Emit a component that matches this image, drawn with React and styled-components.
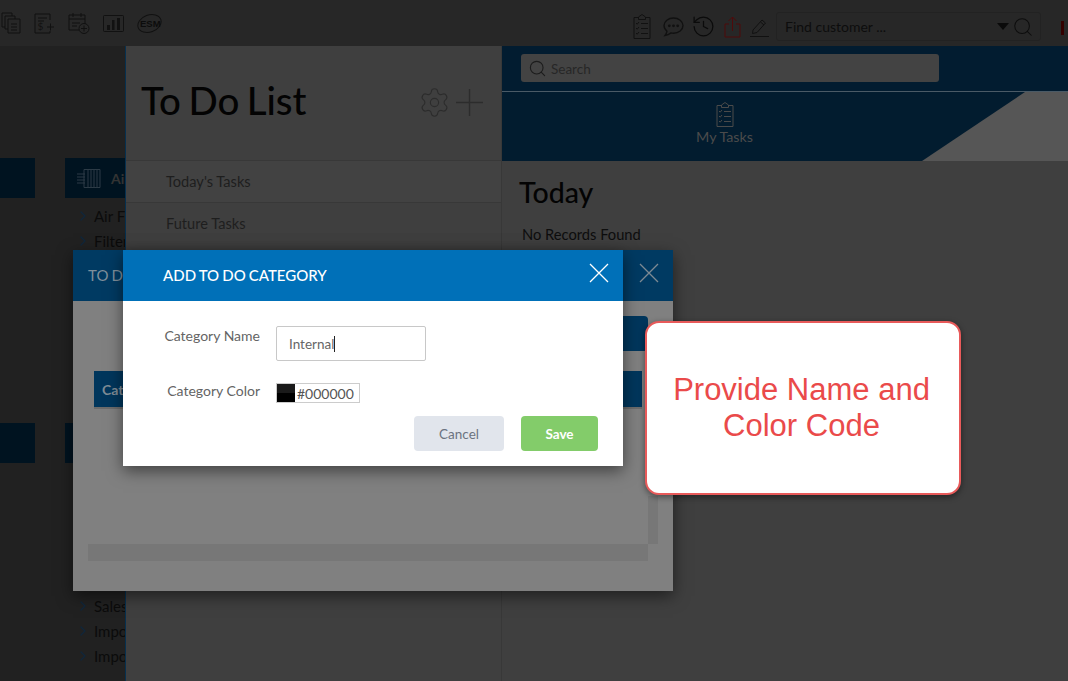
import React from "react";
import styled, { createGlobalStyle } from "styled-components";
import { Settings, Search, ChevronRight, History } from "lucide-react";

const Global = createGlobalStyle`
  html, body { margin: 0; padding: 0; background: #212121; }
  * { box-sizing: border-box; }
  body { font-family: Lato, "Noto Sans", sans-serif; }
`;

const Page = styled.div`
  position: relative;
  width: 1068px;
  height: 681px;
  overflow: hidden;
  display: flex;
  flex-direction: column;
  background: #212121;
`;

const TopBar = styled.header`
  height: 46px;
  flex: none;
  background: #272727;
  display: flex;
  align-items: center;
  padding: 0 0 0 1px;
`;

const LeftTools = styled.div`
  display: flex;
  align-items: center;
  gap: 13px;
`;

const RightTools = styled.div`
  display: flex;
  align-items: center;
  margin-left: auto;
  margin-top: 7px;
  color: #0b0b0b;
`;

const ToolIcon = styled.svg`
  display: block;
  flex: none;
  fill: none;
  stroke: ${(p) => p.$color || "#111"};
  stroke-width: ${(p) => p.$stroke || 1};
`;

const IconSlot = styled.span`
  display: flex;
  margin-left: ${(p) => p.$gap}px;
  color: #0b0b0b;
`;

const FindBox = styled.div`
  width: 265px;
  height: 29px;
  margin: 0 27px 0 6px;
  border: 1px solid #222;
  border-radius: 3px;
  display: flex;
  align-items: center;
  padding: 0 6px 0 8px;
  color: #0d0d0d;
  font-size: 14px;
  position: relative;
  &::after {
    content: "";
    position: absolute;
    right: -24px;
    top: 8px;
    width: 3px;
    height: 14px;
    background: #300;
  }
`;

const FindText = styled.span`
  flex: 1;
`;

const Caret = styled.span`
  width: 0;
  height: 0;
  border-left: 6px solid transparent;
  border-right: 6px solid transparent;
  border-top: 7px solid #0a0a0a;
  margin-right: 3px;
`;

const Workspace = styled.main`
  flex: 1;
  display: grid;
  grid-template-columns: 35px 300px;
  grid-auto-rows: 265px;
  column-gap: 30px;
  padding-top: 112px;
`;

const CategoryCard = styled.section`
  display: flex;
  flex-direction: column;
`;

const CategoryHead = styled.div`
  height: 40px;
  background: #001320;
  color: #333;
  display: flex;
  align-items: center;
  gap: 10px;
  padding-left: 12px;
  font-size: 14px;
  font-weight: 700;
`;

const CategoryList = styled.ul`
  list-style: none;
  margin: 5px 0 0;
  padding: 0 0 0 10px;
`;

const CategoryItem = styled.li`
  height: 25px;
  display: flex;
  align-items: center;
  gap: 3px;
  color: #0b0b0b;
  font-size: 15px;
  svg { color: #10263a; flex: none; }
`;

const TodoPanel = styled.section`
  position: absolute;
  left: 125px;
  top: 46px;
  right: 0;
  bottom: 0;
  display: flex;
  background: #3f3f3f;
  border-left: 1px solid #06304f;
`;

const TodoSide = styled.aside`
  width: 376px;
  flex: none;
  border-right: 1px solid #383838;
`;

const TodoTitleBar = styled.div`
  height: 114px;
  display: flex;
  align-items: center;
  padding: 0 18px 2px 15px;
  color: #2c2c2c;
  gap: 5px;
`;

const TodoTitle = styled.h1`
  margin: 0 0 5px;
  flex: 1;
  font-size: 38.5px;
  font-weight: 500;
  color: #030303;
  letter-spacing: -0.1px;
  word-spacing: -2px;
`;

const TodoRow = styled.div`
  height: 42px;
  display: flex;
  align-items: center;
  padding: 0 0 1px 40px;
  border-top: 1px solid #383838;
  font-size: 14.6px;
  color: #1e1e1e;
  background: ${(p) => (p.$active ? "#424242" : "transparent")};
`;

const TodoMain = styled.div`
  flex: 1;
  display: flex;
  flex-direction: column;
  min-width: 0;
`;

const SearchStrip = styled.div`
  height: 46px;
  flex: none;
  background: #021c30;
  border-bottom: 1px solid #4a5a66;
  padding: 8px 0 0 19px;
`;

const SearchField = styled.div`
  width: 418px;
  height: 28px;
  background: #434343;
  border-radius: 3px;
  display: flex;
  align-items: center;
  gap: 4px;
  padding: 1px 0 0 7px;
  font-size: 13.5px;
  color: #272727;
  svg { color: #1c1c1c; }
`;

const TabStrip = styled.div`
  height: 69px;
  flex: none;
  background: #565656;
`;

const ActiveTab = styled.div`
  height: 100%;
  width: 100%;
  background: #021c2f;
  clip-path: polygon(0 0, 523px 0, 420px 100%, 0 100%);
  padding: 10px 0 0;
  color: #4b4b4b;
  font-size: 14.3px;
`;

const TabInner = styled.div`
  width: 445px;
  display: flex;
  flex-direction: column;
  align-items: center;
`;

const TabLabel = styled.span`
  margin-top: 1px;
`;

const TodayPane = styled.div`
  flex: 1;
  padding: 13px 17px;
`;

const TodayTitle = styled.h2`
  margin: 0;
  font-size: 28.5px;
  font-weight: 500;
  color: #030303;
  line-height: 36px;
`;

const EmptyNote = styled.p`
  margin: 15px 0 0 3px;
  font-size: 14.7px;
  color: #0e0e0e;
`;

const CategoriesModal = styled.section`
  position: absolute;
  left: 73px;
  top: 250px;
  width: 600px;
  height: 341px;
  background: #808080;
  box-shadow: 0 5px 15px rgba(0, 0, 0, 0.5);
`;

const ModalHead = styled.header`
  height: 51px;
  background: ${(p) => p.$bg};
  color: ${(p) => p.$fg};
  display: flex;
  align-items: center;
  justify-content: space-between;
  padding: 0 ${(p) => p.$right}px 1px ${(p) => p.$left}px;
  font-size: 15px;
  svg { margin-top: -5px; }
`;

const ModalTitle = styled.span`
  font-weight: ${(p) => p.$weight};
  word-spacing: -0.7px;
`;

const AddButton = styled.div`
  position: absolute;
  right: 25px;
  top: 66px;
  width: 60px;
  height: 35px;
  background: #00365c;
  border-radius: 4px;
`;

const TableHead = styled.div`
  position: absolute;
  left: 21px;
  top: 121px;
  width: 548px;
  height: 36px;
  background: #00365c;
  color: #7e8b95;
  font-weight: 700;
  font-size: 14px;
  display: flex;
  align-items: center;
  padding: 0 0 0 8px;
  box-shadow: 0 2px 0 #6c6c6c;
`;

const ScrollH = styled.div`
  position: absolute;
  left: 15px;
  top: 294px;
  width: 560px;
  height: 17px;
  background: #777;
`;

const ScrollV = styled.div`
  position: absolute;
  left: 575px;
  top: 246px;
  width: 10px;
  height: 48px;
  background: #777;
`;

const AddModal = styled.section`
  position: absolute;
  left: 123px;
  top: 250px;
  width: 500px;
  height: 216px;
  background: #fff;
  box-shadow: 0 5px 15px rgba(0, 0, 0, 0.5);
`;

const FormBody = styled.div`
  padding: 25px 25px 0 0;
  display: flex;
  flex-direction: column;
`;

const FieldRow = styled.div`
  display: flex;
  align-items: flex-start;
  height: ${(p) => p.$height}px;
`;

const FieldLabel = styled.label`
  width: 137px;
  margin-top: ${(p) => p.$top}px;
  text-align: right;
  font-size: 14px;
  color: #646464;
  line-height: 20px;
`;

const TextInput = styled.div`
  width: 150px;
  height: 35px;
  margin-left: 16px;
  border: 1px solid #c8c8c8;
  border-radius: 2px;
  padding-left: 12px;
  font-size: 13.5px;
  color: #666;
  display: flex;
  align-items: center;
`;

const Cursor = styled.span`
  width: 1px;
  height: 16px;
  background: #222;
`;

const ColorField = styled.div`
  margin-left: 16px;
  width: 84px;
  height: 20px;
  border: 1px solid #ccc;
  display: flex;
  align-items: center;
  font-size: 14px;
  color: #555;
`;

const Swatch = styled.span`
  width: 18px;
  height: 18px;
  margin-right: 2px;
  background: linear-gradient(#1a1a1a 50%, #000 50%);
`;

const FormActions = styled.div`
  display: flex;
  justify-content: flex-end;
  gap: 17px;
  margin-top: -7px;
`;

const ActionButton = styled.button`
  height: 35px;
  border: 0;
  border-radius: 4px;
  font-family: inherit;
  font-size: 13.5px;
  width: ${(p) => p.$width}px;
  background: ${(p) => p.$bg};
  color: ${(p) => p.$fg};
  font-weight: ${(p) => p.$weight};
`;

const Callout = styled.aside`
  position: absolute;
  left: 645px;
  top: 321px;
  width: 316px;
  height: 174px;
  background: #fff;
  border: 2px solid #e85a5a;
  border-radius: 14px;
  box-shadow: 0 2px 6px rgba(0, 0, 0, 0.45);
  display: flex;
  align-items: center;
  justify-content: center;
  text-align: center;
  font-family: "Liberation Sans", Arial, sans-serif;
  font-size: 31px;
  line-height: 36px;
  color: #ea4a4a;
  padding: 0 3px 1px 0;
`;

const Clipboard = ({ color = "#111" }) => (
  <ToolIcon $color={color} width={18} height={25} viewBox="0 0 18 25">
    <path d="M5.5 3.5H1v21h16v-21h-4.5M5.5 5.5V3l3.5-2.5L12.5 3v2.5z" />
    <path d="M3 9l1.2 1.2L6 8M3 14l1.2 1.2L6 13M3 19l1.2 1.2L6 18M8 9.5h7M8 14.5h7M8 19.5h7" />
  </ToolIcon>
);

const CloseMark = ({ color }) => (
  <ToolIcon $color={color} $stroke={1.3} width={20} height={20} viewBox="0 0 20 20">
    <path d="M1 1l18 18M19 1L1 19" />
  </ToolIcon>
);

const leftIcons = [
  <ToolIcon key="a" width={20} height={22} viewBox="0 0 20 22">
    <path d="M1 1h10v3M1 1v14h3M4 4h10v3M4 4v13h3M7 7h12v14H7zM10 12h6M10 15h6M10 18h6" />
  </ToolIcon>,
  <ToolIcon key="b" width={21} height={21} viewBox="0 0 21 21">
    <path d="M16 7V1H1v19h15v-2M4 5h9M4 8h6" />
    <path d="M13 14h7M16.5 10.5v7" />
    <text x="3.5" y="17" fontSize="10" fontFamily="Lato" fill="#111" stroke="none">$</text>
  </ToolIcon>,
  <ToolIcon key="c" width={22} height={22} viewBox="0 0 22 22">
    <path d="M11 18H1V3h16v9M1 7h16M5 1v4M13 1v4M4 11h8M4 14h5" />
    <circle cx="16" cy="16.5" r="5" />
    <path d="M13 16.5h6M16 13.5v6" />
  </ToolIcon>,
  <ToolIcon key="d" width={21} height={17} viewBox="0 0 21 17">
    <rect x="0.5" y="0.5" width="20" height="16" rx="1" />
    <path d="M4 10h3v5H4zM9 5h2.5v10H9zM14 3h3v12h-3z" fill="#111" stroke="none" />
  </ToolIcon>,
  <ToolIcon key="e" width={25} height={21} viewBox="0 0 25 21">
    <ellipse cx="12.5" cy="10.5" rx="12" ry="8.5" transform="rotate(-20 12.5 10.5)" />
    <text x="3" y="14" fontSize="9.5" fontWeight="700" fontFamily="Liberation Sans" fill="#0c0c0c" stroke="none">ESM</text>
  </ToolIcon>,
];

export default function App() {
  return (
    <Page>
      <Global />
      <TopBar>
        <LeftTools>{leftIcons}</LeftTools>
        <RightTools>
          <IconSlot $gap={0}><Clipboard /></IconSlot>
          <IconSlot $gap={12}>
            <ToolIcon $stroke={1.4} width={21} height={20} viewBox="0 0 21 20">
              <path d="M10.5 1C5.3 1 1 4.4 1 8.6c0 2.2 1.2 4.2 3 5.6-.2 1.6-1 3-2 4.3 2.3-.3 4.4-1.3 6-2.6.8.2 1.6.3 2.5.3 5.2 0 9.5-3.4 9.5-7.6S15.7 1 10.5 1z" />
              <circle cx="6.3" cy="8.8" r="1.4" fill="#111" stroke="none" />
              <circle cx="10.5" cy="8.8" r="1.4" fill="#111" stroke="none" />
              <circle cx="14.7" cy="8.8" r="1.4" fill="#111" stroke="none" />
            </ToolIcon>
          </IconSlot>
          <IconSlot $gap={7}><History size={25} strokeWidth={1.2} /></IconSlot>
          <IconSlot $gap={8}>
            <ToolIcon $color="#4f0a0a" width={17} height={22} viewBox="0 0 17 22">
              <path d="M5 8H1v13h15V8h-4M8.5 15V1M4.5 5l4-4 4 4" />
            </ToolIcon>
          </IconSlot>
          <IconSlot $gap={9}>
            <ToolIcon width={20} height={20} viewBox="0 0 20 20">
              <path d="M3 13l9-10 3.5 3L7 15.5 2.5 16.5zM10.5 5l3.5 3M0 19.5h19" />
            </ToolIcon>
          </IconSlot>
          <FindBox>
            <FindText>Find customer ...</FindText>
            <Caret />
            <Search size={22} strokeWidth={1.1} />
          </FindBox>
        </RightTools>
      </TopBar>

      <Workspace>
        <CategoryCard><CategoryHead /></CategoryCard>
        <CategoryCard>
          <CategoryHead>
            <ToolIcon $color="#2c3b46" width={24} height={19} viewBox="0 0 24 19">
              <path d="M7 .5h16v18H7zM11 .5v18M14 .5v18M17 .5v18M20 .5v18M0 5h8M0 8h8M0 11h8M0 14h8" />
            </ToolIcon>
            Air
          </CategoryHead>
          <CategoryList>
            <CategoryItem><ChevronRight size={16} />Air Filters</CategoryItem>
            <CategoryItem><ChevronRight size={16} />Filters</CategoryItem>
          </CategoryList>
        </CategoryCard>
        <CategoryCard><CategoryHead /></CategoryCard>
        <CategoryCard>
          <CategoryHead />
          <CategoryList>
            {["Items", "Orders", "Stock", "Parts", "Vendors", "Sales", "Import", "Import"].map((t, i) => (
              <CategoryItem key={i}><ChevronRight size={16} />{t}</CategoryItem>
            ))}
          </CategoryList>
        </CategoryCard>
      </Workspace>

      <TodoPanel>
        <TodoSide>
          <TodoTitleBar>
            <TodoTitle>To Do List</TodoTitle>
            <Settings size={33} strokeWidth={0.8} />
            <ToolIcon $color="#2c2c2c" $stroke={1.4} width={27} height={27} viewBox="0 0 27 27">
              <path d="M0 13.5h27M13.5 0v27" />
            </ToolIcon>
          </TodoTitleBar>
          <TodoRow $active>Today's Tasks</TodoRow>
          <TodoRow>Future Tasks</TodoRow>
        </TodoSide>
        <TodoMain>
          <SearchStrip>
            <SearchField><Search size={19} strokeWidth={1.4} />Search</SearchField>
          </SearchStrip>
          <TabStrip>
            <ActiveTab>
              <TabInner>
                <Clipboard color="#4a4a4a" />
                <TabLabel>My Tasks</TabLabel>
              </TabInner>
            </ActiveTab>
          </TabStrip>
          <TodayPane>
            <TodayTitle>Today</TodayTitle>
            <EmptyNote>No Records Found</EmptyNote>
          </TodayPane>
        </TodoMain>
      </TodoPanel>

      <CategoriesModal>
        <ModalHead $bg="#003a62" $fg="#7f8f9b" $left={15} $right={14}>
          <ModalTitle $weight={400}>TO DO CATEGORY</ModalTitle>
          <CloseMark color="#7d8a93" />
        </ModalHead>
        <AddButton />
        <TableHead>Category</TableHead>
        <ScrollV />
        <ScrollH />
      </CategoriesModal>

      <AddModal>
        <ModalHead $bg="#0070b8" $fg="#fff" $left={40} $right={14}>
          <ModalTitle $weight={500}>ADD TO DO CATEGORY</ModalTitle>
          <CloseMark color="#fff" />
        </ModalHead>
        <FormBody>
          <FieldRow $height={57}>
            <FieldLabel $top={0}>Category Name</FieldLabel>
            <TextInput>Internal<Cursor /></TextInput>
          </FieldRow>
          <FieldRow $height={40}>
            <FieldLabel $top={-2}>Category Color</FieldLabel>
            <ColorField><Swatch />#000000</ColorField>
          </FieldRow>
          <FormActions>
            <ActionButton $width={90} $bg="#e1e5ec" $fg="#6b7380" $weight={400}>Cancel</ActionButton>
            <ActionButton $width={77} $bg="#83cc6a" $fg="#fff" $weight={700}>Save</ActionButton>
          </FormActions>
        </FormBody>
      </AddModal>

      <Callout>Provide Name and<br />Color Code</Callout>
    </Page>
  );
}
